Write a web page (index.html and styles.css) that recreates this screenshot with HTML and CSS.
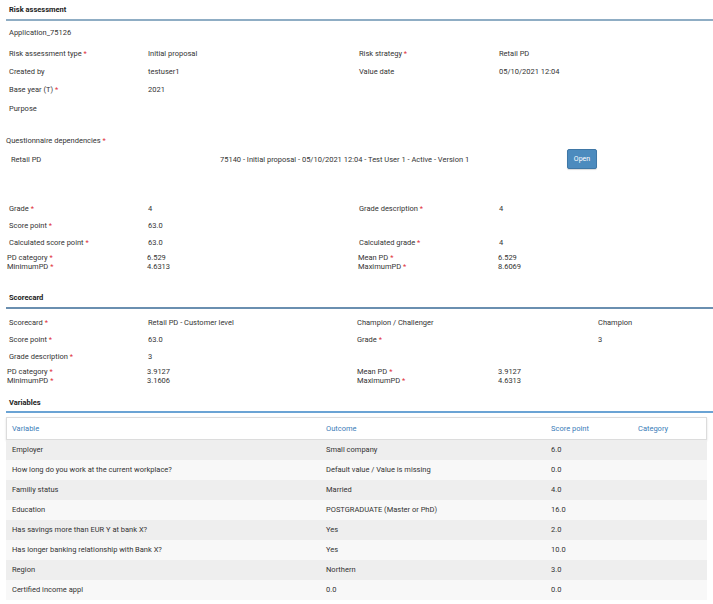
FILE: index.html
```html
<!DOCTYPE html>
<html>
<head>
<meta charset="utf-8">
<link rel="stylesheet" href="styles.css">
</head>
<body>
<div class="page">
  <div class="sec-title t1">Risk assessment</div>
  <div class="app-name">Application_75126</div>
  <div class="grid g-top">
    <div>Risk assessment type <span class="req">*</span></div><div>Initial proposal</div><div>Risk strategy <span class="req">*</span></div><div>Retail PD</div>
    <div>Created by</div><div>testuser1</div><div>Value date</div><div>05/10/2021 12:04</div>
    <div>Base year (T) <span class="req">*</span></div><div>2021</div><div></div><div></div>
  </div>
  <div class="purpose">Purpose</div>
  <div class="qd-label">Questionnaire dependencies <span class="req">*</span></div>
  <div class="qd-row">
    <div class="qd-name">Retail PD</div>
    <div class="qd-desc">75140 - Initial proposal - 05/10/2021 12:04 - Test User 1 - Active - Version 1</div>
    <button class="btn">Open</button>
  </div>
  <div class="grid g-grade">
    <div>Grade <span class="req">*</span></div><div>4</div><div>Grade description <span class="req">*</span></div><div>4</div>
    <div>Score point <span class="req">*</span></div><div>63.0</div><div></div><div></div>
    <div>Calculated score point <span class="req">*</span></div><div>63.0</div><div>Calculated grade <span class="req">*</span></div><div>4</div>
  </div>
  <div class="grid g-pd">
    <div>PD category <span class="req">*</span></div><div>6.529</div><div>Mean PD <span class="req">*</span></div><div>6.529</div>
    <div>MinimumPD <span class="req">*</span></div><div>4.6313</div><div>MaximumPD <span class="req">*</span></div><div>8.6069</div>
  </div>

  <div class="sec-title t2">Scorecard</div>
  <div class="grid g-sc">
    <div>Scorecard <span class="req">*</span></div><div>Retail PD - Customer level</div><div>Champion / Challenger</div><div>Champion</div>
    <div>Score point <span class="req">*</span></div><div>63.0</div><div>Grade <span class="req">*</span></div><div>3</div>
    <div>Grade description <span class="req">*</span></div><div>3</div><div></div><div></div>
  </div>
  <div class="grid g-pd2">
    <div>PD category <span class="req">*</span></div><div>3.9127</div><div>Mean PD <span class="req">*</span></div><div>3.9127</div>
    <div>MinimumPD <span class="req">*</span></div><div>3.1606</div><div>MaximumPD <span class="req">*</span></div><div>4.6313</div>
  </div>

  <div class="sec-title t3">Variables</div>
  <div class="table">
    <div class="tr th"><div>Variable</div><div>Outcome</div><div>Score point</div><div>Category</div></div>
    <div class="tr odd"><div>Employer</div><div>Small company</div><div>6.0</div><div></div></div>
    <div class="tr even"><div>How long do you work at the current workplace?</div><div>Default value / Value is missing</div><div>0.0</div><div></div></div>
    <div class="tr odd"><div>Familiy status</div><div>Married</div><div>4.0</div><div></div></div>
    <div class="tr even"><div>Education</div><div>POSTGRADUATE (Master or PhD)</div><div>16.0</div><div></div></div>
    <div class="tr odd"><div>Has savings more than EUR Y at bank X?</div><div>Yes</div><div>2.0</div><div></div></div>
    <div class="tr even"><div>Has longer banking relationship with Bank X?</div><div>Yes</div><div>10.0</div><div></div></div>
    <div class="tr odd"><div>Region</div><div>Northern</div><div>3.0</div><div></div></div>
    <div class="tr even"><div>Certified income appl</div><div>0.0</div><div>0.0</div><div></div></div>
  </div>
</div>
</body>
</html>
```
FILE: styles.css
```css
html, body {
  margin: 0;
  padding: 0;
  background: #fff;
}
body {
  font-family: Roboto, "Liberation Sans", Arial, sans-serif;
  font-size: 7.5px;
  color: #333;
}
.page {
  padding-left: 6px;
  width: 707px;
}
.req {
  color: #e0303a;
}
.sec-title {
  font-weight: bold;
  color: #222;
  padding-left: 3px;
  box-sizing: border-box;
}
.t1 {
  height: 21px;
  line-height: 20px;
  border-bottom: 2px solid #8fadc4;
}
.t2 {
  height: 17px;
  margin-top: 21px;
  line-height: 12px;
  border-bottom: 2px solid #6a8fb0;
}
.t3 {
  height: 14px;
  margin-top: 14px;
  line-height: 8px;
  border-bottom: 2px solid #6aa3d4;
}
.app-name {
  height: 18px;
  line-height: 24px;
  padding-left: 3px;
}
.grid {
  display: grid;
}
.g-top {
  margin-top: 6px;
  padding-left: 3px;
  grid-template-columns: 139px 211px 140px 1fr;
  grid-auto-rows: 18px;
  line-height: 18px;
}
.purpose {
  height: 18px;
  line-height: 18px;
  padding-left: 3px;
  margin-top: 1px;
}
.qd-label {
  margin-top: 14px;
  height: 18px;
  line-height: 18px;
}
.qd-row {
  display: flex;
  align-items: center;
  height: 18px;
}
.qd-name {
  width: 214px;
  padding-left: 5px;
  box-sizing: border-box;
}
.qd-desc {
  width: 347px;
}
.btn {
  font-family: inherit;
  font-size: 7px;
  color: #fff;
  background: #4c8bbe;
  border: 1px solid #3f77a6;
  border-radius: 2px;
  width: 30px;
  height: 20px;
  padding: 0;
  box-shadow: 0 1px 1px rgba(0,0,0,0.15);
  flex: none;
}
.g-grade {
  margin-top: 32px;
  padding-left: 3px;
  grid-template-columns: 139px 211px 140px 1fr;
  grid-auto-rows: 17px;
  line-height: 17px;
}
.g-pd {
  padding-left: 1px;
  grid-template-columns: 140px 211px 140px 1fr;
  grid-auto-rows: 9px;
  line-height: 9px;
  margin-top: 2px;
}
.g-sc {
  margin-top: 5px;
  padding-left: 3px;
  grid-template-columns: 139px 209px 241px 1fr;
  grid-auto-rows: 17px;
  line-height: 17px;
}
.g-pd2 {
  padding-left: 1px;
  grid-template-columns: 140px 210px 141px 1fr;
  grid-auto-rows: 9px;
  line-height: 9px;
  margin-top: 2px;
}
.table {
  margin-top: 4px;
  width: 701px;
}
.tr {
  display: grid;
  grid-template-columns: 314px 225px 87px 1fr;
  height: 20px;
  line-height: 20px;
  padding-left: 6px;
}
.th {
  height: 23px;
  line-height: 22px;
  color: #3a7db8;
  background: #fff;
  border: 1px solid #dcdcdc;
  box-shadow: 0 1px 2px rgba(0,0,0,0.12);
  padding-left: 5px;
  box-sizing: border-box;
}
.odd {
  background: #eeeeee;
}
.even {
  background: #f8f8f8;
}
```
